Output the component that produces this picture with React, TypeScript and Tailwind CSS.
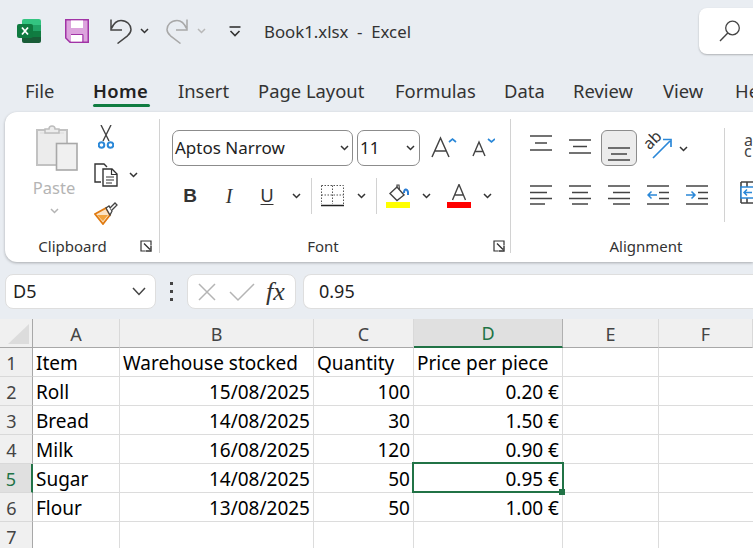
const uiFont = "font-['Noto_Sans',sans-serif]"
const cellFont = "font-['Noto_Sans',sans-serif]"

const tabs = [
  { label: "File", width: "w-[68px]" },
  { label: "Home", width: "w-[85px]", active: true },
  { label: "Insert", width: "w-[80px]" },
  { label: "Page Layout", width: "w-[137px]" },
  { label: "Formulas", width: "w-[109px]" },
  { label: "Data", width: "w-[69px]" },
  { label: "Review", width: "w-[90px]" },
  { label: "View", width: "w-[72px]" },
  { label: "Help", width: "w-[60px]" },
]

const rows = [
  ["Item", "Warehouse stocked", "Quantity", "Price per piece"],
  ["Roll", "15/08/2025", "100", "0.20 €"],
  ["Bread", "14/08/2025", "30", "1.50 €"],
  ["Milk", "16/08/2025", "120", "0.90 €"],
  ["Sugar", "14/08/2025", "50", "0.95 €"],
  ["Flour", "13/08/2025", "50", "1.00 €"],
  ["", "", "", ""],
]

function Chevron({ color = "#333", className = "" }: { color?: string; className?: string }) {
  return (
    <svg width="9" height="6" viewBox="0 0 9 6" className={"shrink-0 " + className}>
      <path d="M1 1 L4.5 4.5 L8 1" fill="none" stroke={color} strokeWidth="1.5" />
    </svg>
  )
}

function ExcelLogo() {
  return (
    <svg width="24" height="24" viewBox="0 0 24 24" className="shrink-0">
      <path d="M5 2 a2 2 0 0 1 2-2 H22 a2 2 0 0 1 2 2 V6 H5 Z" fill="#33c481" />
      <rect x="5" y="6" width="19" height="6" fill="#21a366" />
      <rect x="5" y="12" width="19" height="6" fill="#107c41" />
      <path d="M5 18 H24 V22 a2 2 0 0 1-2 2 H7 a2 2 0 0 1-2-2 Z" fill="#185c37" />
      <rect x="0" y="5" width="16" height="14" rx="2" fill="#0f7a40" />
      <path d="M5 8.5 L11 15.5 M11 8.5 L5 15.5" stroke="#fff" strokeWidth="1.8" />
    </svg>
  )
}

function SaveIcon() {
  return (
    <svg width="24" height="24" viewBox="0 0 24 24" className="shrink-0">
      <path d="M.75 .75 H23.25 V23.25 H5 L.75 19 Z" fill="#dca4dd" stroke="#a134a6" strokeWidth="1.5" />
      <rect x="6" y="1.5" width="12" height="7.5" fill="#fff" />
      <rect x="6" y="16" width="11" height="6.5" fill="#fff" />
      <path d="M6 15.5 H18 V23" fill="none" stroke="#a134a6" strokeWidth="1" />
    </svg>
  )
}

function UndoIcon({ color, flip = false }: { color: string; flip?: boolean }) {
  return (
    <svg width="24" height="25" viewBox="0 0 24 25" className={"shrink-0 " + (flip ? "-scale-x-100" : "")}>
      <path
        d="M3 0.5 V11 H14 M3.5 9.5 C6 3.5 9.5 1.5 13 1.5 C19 1.5 23 6 23 10.5 C23 13 21.5 15 19.5 16.8 L9.5 24.5"
        fill="none"
        stroke={color}
        strokeWidth="1.5"
      />
    </svg>
  )
}

function CustomizeIcon() {
  return (
    <svg width="12" height="11" viewBox="0 0 12 11" className="shrink-0">
      <path d="M0.5 1 H11.5" stroke="#333" strokeWidth="1.6" />
      <path d="M1.5 5 L6 9.5 L10.5 5" fill="none" stroke="#333" strokeWidth="1.6" />
    </svg>
  )
}

function SearchIcon() {
  return (
    <svg width="22" height="22" viewBox="0 0 22 22" className="shrink-0">
      <circle cx="13.5" cy="8" r="6.8" fill="none" stroke="#444" strokeWidth="1.3" />
      <path d="M8.8 13 L1 21" stroke="#444" strokeWidth="1.4" />
    </svg>
  )
}

function PasteIcon() {
  return (
    <svg width="42" height="46" viewBox="0 0 42 46" className="shrink-0">
      <path d="M1 5 H31 V40 H1 Z" fill="#ececec" stroke="#c2c2c2" strokeWidth="2" />
      <path d="M4 8 H28" stroke="#dcdcdc" strokeWidth="1" />
      <path d="M9 8 V4 H13 C13 0 19 0 19 4 H23 V8 Z" fill="#ececec" stroke="#bdbdbd" strokeWidth="1.5" />
      <rect x="20.5" y="18.5" width="20.5" height="26.5" fill="#f0f0f0" stroke="#a8a8a8" strokeWidth="1.6" />
    </svg>
  )
}

function ScissorsIcon() {
  return (
    <svg width="16" height="24" viewBox="0 0 16 24" className="shrink-0">
      <path d="M3 0 L11 16 M13 0 L5 16" stroke="#444" strokeWidth="1.4" />
      <circle cx="3.5" cy="20" r="2.8" fill="none" stroke="#2b88d8" strokeWidth="2" />
      <circle cx="12.5" cy="20" r="2.8" fill="none" stroke="#2b88d8" strokeWidth="2" />
    </svg>
  )
}

function CopyIcon() {
  return (
    <svg width="24" height="24" viewBox="0 0 24 24" className="shrink-0">
      <path d="M7 19 H1 V1 H10 L13 4" fill="none" stroke="#333" strokeWidth="1.4" />
      <path d="M9 6 H18 L23 11 V23 H9 Z" fill="#fff" stroke="#333" strokeWidth="1.4" />
      <path d="M17.5 6 V11.5 H23 M12 14 H20 M12 17 H20 M12 20 H18" fill="none" stroke="#333" strokeWidth="1.2" />
    </svg>
  )
}

function PainterIcon() {
  return (
    <svg width="24" height="23" viewBox="0 0 24 23" className="shrink-0">
      <path d="M1 12 L12 6 L16 13 L9 22 Z" fill="#fbe3c4" stroke="#e07b12" strokeWidth="1.8" />
      <path d="M3 13 L9 19 L14 13" fill="#f2a33c" />
      <path d="M12 6 L15 4 L18 9 L16 13 Z" fill="#fff" stroke="#444" strokeWidth="1.3" />
      <path d="M16 6 L21 1 L23 3 L18 8" fill="#fff" stroke="#444" strokeWidth="1.3" />
    </svg>
  )
}

function Launcher() {
  return (
    <svg width="12" height="12" viewBox="0 0 12 12" className="shrink-0">
      <path d="M11 5 V1 H1 V11 H5" fill="none" stroke="#333" strokeWidth="1.2" />
      <path d="M4 3.5 L10 9.5 M11 5.5 V11 H5.5" fill="none" stroke="#333" strokeWidth="1.4" />
    </svg>
  )
}

function GrowIcon({ small = false }: { small?: boolean }) {
  const w = small ? 23 : 26
  return (
    <svg width={w} height="24" viewBox={`0 0 ${w} 24`} className="shrink-0">
      {small ? (
        <>
          <path d="M1 20 L7 6 L13 20 M3 15.5 H11" fill="none" stroke="#444" strokeWidth="1.4" />
          <path d="M16 3 L19.5 6 L23 3" fill="none" stroke="#2b88d8" strokeWidth="1.7" />
        </>
      ) : (
        <>
          <path d="M1 21 L9.5 2 L18 21 M4 15 H15" fill="none" stroke="#444" strokeWidth="1.5" />
          <path d="M18 6 L21.5 3 L25 6" fill="none" stroke="#2b88d8" strokeWidth="1.7" />
        </>
      )}
    </svg>
  )
}

function BordersIcon() {
  return (
    <svg width="23" height="22" viewBox="0 0 23 22" className="shrink-0">
      <path
        d="M.5 .5 H22.5 V19 M.5 .5 V19 M11.5 .5 V19 M.5 10 H22.5"
        fill="none"
        stroke="#555"
        strokeWidth="1"
        strokeDasharray="1.5 1.5"
      />
      <path d="M0 20.5 H23" stroke="#222" strokeWidth="1.6" />
    </svg>
  )
}

function FillIcon() {
  return (
    <svg width="24" height="24" viewBox="0 0 24 24" className="shrink-0">
      <path d="M4 9.5 L11 3 L18 11 L11 16.5 Z" fill="none" stroke="#444" strokeWidth="1.4" />
      <path d="M11 3 V1 H13 L13.5 6" fill="none" stroke="#444" strokeWidth="1.2" />
      <path d="M18 9 C18 5 21 4 22 8 L22 11" fill="none" stroke="#2b7cd3" strokeWidth="2" />
      <rect x="0" y="18" width="24" height="6" fill="#ffff00" />
    </svg>
  )
}

function FontColorIcon() {
  return (
    <svg width="24" height="24" viewBox="0 0 24 24" className="shrink-0">
      <path d="M5.5 16 L12 0.5 L18.5 16 M8 11 H16" fill="none" stroke="#444" strokeWidth="1.4" />
      <rect x="0" y="18" width="24" height="6" fill="#ff0000" />
    </svg>
  )
}

// horizontal bars used by all the alignment buttons, each bar is [x1, x2, y]
function Bars({ bars, arrow }: { bars: number[][]; arrow?: "in" | "out" }) {
  return (
    <svg width="22" height="20" viewBox="0 0 22 20" className="shrink-0">
      {bars.map(([x1, x2, y]) => (
        <path key={`${x1}-${y}`} d={`M${x1} ${y} H${x2}`} stroke="#444" strokeWidth="1.3" />
      ))}
      {arrow === "in" && (
        <path d="M10 10 H1 M4.5 6.5 L1 10 L4.5 13.5" fill="none" stroke="#2b88d8" strokeWidth="1.5" />
      )}
      {arrow === "out" && (
        <path d="M0 10 H9 M5.5 6.5 L9 10 L5.5 13.5" fill="none" stroke="#2b88d8" strokeWidth="1.5" />
      )}
    </svg>
  )
}

function OrientationIcon() {
  return (
    <svg width="26" height="24" viewBox="0 0 26 24" className="shrink-0 overflow-visible">
      <path d="M7 23 L24 6 M17 4.5 H25 V12" fill="none" stroke="#2b88d8" strokeWidth="1.7" />
      <text x="0" y="0" transform="translate(3.5 15.5) rotate(-45)" fontSize="16" fontFamily="Noto Sans" fill="#333">
        ab
      </text>
    </svg>
  )
}

function MergeIcon() {
  return (
    <svg width="24" height="23" viewBox="0 0 24 23" className="shrink-0">
      <path d="M1 1 H24 M1 22 H24 M1 1 V22 M7 1 V6 M7 17 V22" fill="none" stroke="#444" strokeWidth="1.6" />
      <rect x="1" y="6" width="23" height="11" fill="#fff" stroke="#2b88d8" strokeWidth="1.5" />
      <path d="M12 11.5 H4 M7 8.5 L4 11.5 L7 14.5" fill="none" stroke="#2b88d8" strokeWidth="1.5" />
    </svg>
  )
}

function GroupFooter({ label, launcher = true, launcherWidth = "w-[19px]" }: { label: string; launcher?: boolean; launcherWidth?: string }) {
  return (
    <div className="flex h-[28px] mb-[2px] items-center text-[15px] text-[#333]">
      <span className="flex-1 text-center">{label}</span>
      {launcher && (
        <span className={launcherWidth + " flex justify-start"}>
          <Launcher />
        </span>
      )}
    </div>
  )
}

function Separator() {
  return <div className="w-px h-[134px] mt-[7px] bg-[#d2d2d2] shrink-0" />
}

function ClipboardGroup() {
  return (
    <div className="w-[154px] shrink-0 flex flex-col">
      <div className="flex-1 flex pt-[13px]">
        <div className="w-[54px] ml-[22px] flex flex-col items-center">
          <div className="ml-[6px]">
            <PasteIcon />
          </div>
          <span className="mt-[6px] text-[16.5px] leading-[22px] text-[#b4b4b4]">Paste</span>
          <Chevron color="#b4b4b4" className="mt-[9px]" />
        </div>
        <div className="ml-[13px] flex flex-col">
          <div className="ml-[4px]">
            <ScissorsIcon />
          </div>
          <div className="mt-[14px] flex items-center">
            <CopyIcon />
            <Chevron className="ml-[11px]" />
          </div>
          <div className="mt-[15px]">
            <PainterIcon />
          </div>
        </div>
      </div>
      <GroupFooter label="Clipboard" />
    </div>
  )
}

function SelectBox({ text, width, chevronClass }: { text: string; width: string; chevronClass: string }) {
  return (
    <div className={width + " h-[36px] rounded-[7px] border border-[#8c8c8c] flex items-center pl-[2px] text-[17px] text-[#222] shrink-0"}>
      <span className="flex-1">{text}</span>
      <Chevron className={chevronClass} />
    </div>
  )
}

function FontGroup() {
  return (
    <div className="w-[350px] shrink-0 flex flex-col">
      <div className="flex-1 pl-[12px] pt-[18px]">
        <div className="flex items-center h-[36px]">
          <SelectBox text="Aptos Narrow" width="w-[181px]" chevronClass="mr-[3px]" />
          <div className="ml-[4px]">
            <SelectBox text="11" width="w-[63px]" chevronClass="mr-[4px]" />
          </div>
          <div className="ml-[11px]">
            <GrowIcon />
          </div>
          <div className="ml-[15px]">
            <GrowIcon small />
          </div>
        </div>
        <div className="flex items-center h-[36px] mt-[12px] text-[#333]">
          <span className="ml-[8px] w-[20px] text-center font-['Liberation_Sans',sans-serif] font-bold text-[19px]">B</span>
          <span className="ml-[19px] w-[20px] text-center font-['Liberation_Serif',serif] italic text-[20px]">I</span>
          <span className="ml-[18px] w-[20px] text-center font-['Liberation_Sans',sans-serif] underline underline-offset-2 text-[18px]">U</span>
          <Chevron className="ml-[15px]" />
          <div className="ml-[10px] w-px h-[36px] bg-[#d2d2d2] shrink-0" />
          <div className="ml-[9px]">
            <BordersIcon />
          </div>
          <Chevron className="ml-[13px]" />
          <div className="ml-[10px] w-px h-[36px] bg-[#d2d2d2] shrink-0" />
          <div className="ml-[9px]">
            <FillIcon />
          </div>
          <Chevron className="ml-[12px]" />
          <div className="ml-[16px]">
            <FontColorIcon />
          </div>
          <Chevron className="ml-[12px]" />
        </div>
      </div>
      <GroupFooter label="Font" launcherWidth="w-[24px] pl-[7px]" />
    </div>
  )
}

function AlignmentGroup() {
  return (
    <div className="w-[270px] shrink-0 flex flex-col">
      <div className="flex-1 flex">
        <div className="w-[213px] shrink-0 pl-[19px] pt-[18px]">
          <div className="flex items-start h-[36px]">
            <div className="mt-[5px]">
              <Bars bars={[[0, 22, 1], [5, 17, 8], [0, 22, 15]]} />
            </div>
            <div className="ml-[17px] mt-[9px]">
              <Bars bars={[[0, 22, 1], [4, 18, 7.5], [0, 22, 14]]} />
            </div>
            <div className="ml-[10px] w-[36px] h-[36px] rounded-[6px] border border-[#8c8c8c] bg-[#ececec] flex justify-center pt-[16px] shrink-0">
              <Bars bars={[[0, 22, 1], [3, 19, 7], [0, 22, 13]]} />
            </div>
            <div className="ml-[9px] mt-[5px]">
              <OrientationIcon />
            </div>
            <Chevron className="ml-[7px] mt-[16px]" />
          </div>
          <div className="flex gap-[17px] mt-[19px]">
            <Bars bars={[[0, 22, 1], [0, 17, 7.5], [0, 22, 13.5], [0, 15, 19]]} />
            <Bars bars={[[0, 22, 1], [3, 19, 7.5], [0, 22, 13.5], [3, 19, 19]]} />
            <Bars bars={[[0, 22, 1], [5, 22, 7.5], [0, 22, 13.5], [5, 22, 19]]} />
            <Bars arrow="in" bars={[[0, 22, 1], [12, 22, 7.5], [12, 22, 13.5], [0, 22, 19]]} />
            <Bars arrow="out" bars={[[0, 22, 1], [12, 22, 7.5], [12, 22, 13.5], [0, 22, 19]]} />
          </div>
        </div>
        <div className="w-px h-[94px] mt-[16px] bg-[#d2d2d2] shrink-0" />
        <div className="pl-[15px] pt-[23px]">
          <div className="text-[16px] leading-[11px] text-[#444] pl-[4px]">
            a
            <br />
            c
          </div>
          <div className="mt-[24px]">
            <MergeIcon />
          </div>
        </div>
      </div>
      <GroupFooter label="Alignment" launcher={false} />
    </div>
  )
}

function Ribbon() {
  return (
    <div className="ml-[5px] h-[150px] bg-white rounded-l-[12px] shadow-[0_1px_3px_rgba(0,0,0,0.28)] flex overflow-hidden">
      <ClipboardGroup />
      <Separator />
      <FontGroup />
      <Separator />
      <AlignmentGroup />
    </div>
  )
}

function FormulaBar() {
  return (
    <div className="mt-[12px] h-[35px] pl-[5px] flex items-stretch text-[18px] text-[#222]">
      <div className="w-[151px] bg-white rounded-[8px] border border-[#dedede] flex items-center pl-[7px] pr-[9px]">
        <span className="flex-1">D5</span>
        <svg width="14" height="9" viewBox="0 0 14 9">
          <path d="M1 1 L7 7.5 L13 1" fill="none" stroke="#444" strokeWidth="1.5" />
        </svg>
      </div>
      <div className="w-[31px] flex flex-col items-center justify-center gap-[5px]">
        <span className="w-[3px] h-[3px] bg-[#444]" />
        <span className="w-[3px] h-[3px] bg-[#444]" />
        <span className="w-[3px] h-[3px] bg-[#444]" />
      </div>
      <div className="w-[109px] bg-white rounded-[8px] border border-[#dedede] flex items-center pl-[9px]">
        <svg width="20" height="20" viewBox="0 0 20 20" className="shrink-0">
          <path d="M2 2 L18 18 M18 2 L2 18" stroke="#b4b4b4" strokeWidth="1.5" />
        </svg>
        <svg width="26" height="20" viewBox="0 0 26 20" className="shrink-0 ml-[12px]">
          <path d="M1 10 L9 18 L25 2" fill="none" stroke="#b4b4b4" strokeWidth="1.5" />
        </svg>
        <span className="ml-[11px] font-['Liberation_Serif',serif] italic text-[26px] text-[#333] leading-none">fx</span>
      </div>
      <div className="ml-[7px] flex-1 bg-white rounded-l-[8px] border border-r-0 border-[#dedede] flex items-center pl-[15px]">
        0.95
      </div>
    </div>
  )
}

function Sheet() {
  return (
    <div className={"mt-[10px] flex-1 bg-white grid grid-cols-[33px_87px_194px_100px_149px_96px_1fr] auto-rows-[29px] overflow-hidden " + cellFont}>
      <div className="bg-[#f0f0f0] border-r border-b border-[#a8a8a8] flex items-end justify-end pr-[3px] pb-[3px]">
        <span className="w-0 h-0 border-l-[21px] border-b-[20px] border-l-transparent border-b-[#dcdcdc]" />
      </div>
      {["A", "B", "C", "D", "E", "F"].map((col) => (
        <div
          key={col}
          className={
            "flex items-center justify-center pt-[2px] text-[18px] " +
            (col === "D"
              ? "bg-[#e0e0e0] text-[#217346] border-b-2 border-b-[#217346] border-r border-r-[#b0b0b0]"
              : "bg-[#f0f0f0] text-[#444] border-b border-b-[#a8a8a8] border-r border-r-[#d9d9d9]")
          }
        >
          {col}
        </div>
      ))}
      {rows.map((row, r) => (
        <div key={r} className="contents">
          <div
            className={
              "pr-[9px] pt-[2px] flex items-center justify-center text-[18px] border-b border-b-[#d9d9d9] " +
              (r === 4
                ? "bg-[#e0e0e0] text-[#217346] border-r-2 border-r-[#217346]"
                : "bg-[#f0f0f0] text-[#444] border-r border-r-[#a8a8a8]")
            }
          >
            {r + 1}
          </div>
          {row.map((cell, c) => (
            <div
              key={c}
              className={
                "relative flex items-center px-[3px] pt-[2px] text-[19px] text-black whitespace-nowrap border-r border-b border-[#dcdcdc] " +
                (r > 0 && c > 0 ? "justify-end" : "justify-start")
              }
            >
              {cell}
              {r === 4 && c === 3 && (
                <>
                  <span className="absolute -left-[2px] -top-[2px] -right-[2px] -bottom-px border-2 border-[#217346]" />
                  <span className="absolute -right-[3px] -bottom-[3px] w-[6px] h-[6px] bg-[#217346] z-10" />
                </>
              )}
            </div>
          ))}
          <div className="border-r border-b border-[#dcdcdc]" />
          <div className="border-b border-[#dcdcdc]" />
        </div>
      ))}
    </div>
  )
}

export default function App() {
  return (
    <div className={"w-[753px] h-[548px] overflow-hidden bg-[#e9edf2] flex flex-col " + uiFont}>
      <div className="h-[62px] shrink-0 flex items-center pl-[17px] overflow-hidden">
        <ExcelLogo />
        <div className="ml-[24px]">
          <SaveIcon />
        </div>
        <div className="ml-[19px]">
          <UndoIcon color="#444" />
        </div>
        <Chevron className="ml-[8px]" />
        <div className="ml-[17px]">
          <UndoIcon color="#a8a8a8" flip />
        </div>
        <Chevron color="#b8b8b8" className="ml-[7px]" />
        <div className="ml-[23px]">
          <CustomizeIcon />
        </div>
        <span className="ml-[23px] w-[170px] pt-[2px] shrink-0 text-[16.8px] text-[#333] whitespace-pre">Book1.xlsx  -  Excel</span>
        <div className="ml-[265px] w-[90px] h-[46px] shrink-0 bg-white rounded-l-[8px] shadow-[0_1px_2px_rgba(0,0,0,0.25)] flex items-center pl-[20px]">
          <SearchIcon />
        </div>
      </div>
      <div className="h-[50px] shrink-0 pl-[25px] pt-[17px] flex items-start text-[18.4px] text-[#333] overflow-hidden">
        {tabs.map((tab) => (
          <div key={tab.label} className={tab.width + " shrink-0 whitespace-nowrap"}>
            <div className={"leading-[24px] " + (tab.active ? "font-semibold text-[#222] tracking-[0.4px]" : "")}>{tab.label}</div>
            {tab.active && <div className="mt-px w-[57px] h-[3px] rounded-full bg-[#107c41]" />}
          </div>
        ))}
      </div>
      <Ribbon />
      <FormulaBar />
      <Sheet />
    </div>
  )
}
